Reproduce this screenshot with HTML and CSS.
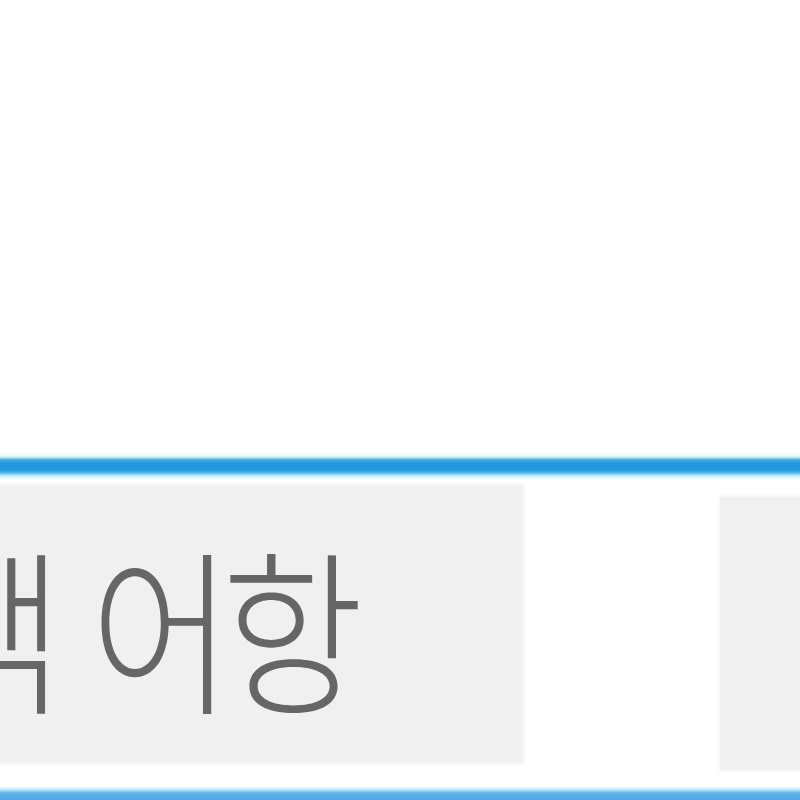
FILE: index.html
```html
<!DOCTYPE html>
<html lang="ko">
<head>
<meta charset="utf-8">
<link rel="stylesheet" href="styles.css">
</head>
<body>
<div class="page">
  <div class="top"></div>
  <div class="rule"></div>
  <div class="tabs">
    <div class="tab tab-first"><span class="label">색 어항</span></div>
    <div class="tab-gap"></div>
    <div class="tab tab-second"></div>
  </div>
  <div class="rule rule-bottom"></div>
</div>
</body>
</html>
```
FILE: styles.css
```css
html, body {
  margin: 0;
  padding: 0;
  background: #ffffff;
  overflow: hidden;
}
.page {
  width: 800px;
  height: 800px;
  display: flex;
  flex-direction: column;
  overflow: hidden;
}
.top {
  height: 454px;
  flex: none;
}
.rule {
  height: 26px;
  flex: none;
  background: linear-gradient(to bottom,
    #ffffff 0px, #c8f1ff 3px, #3aa8e6 6px, #2196dc 10px, #2598de 16px,
    #5ab9ee 19px, #c6eeff 22px, #ffffff 26px);
}
.rule-bottom {
  height: 14px;
  background: linear-gradient(to bottom,
    #ffffff 0px, #c8f1ff 3px, #62b6ea 7px, #4aa8e4 14px);
}
.tabs {
  flex: 1;
  display: flex;
  align-items: flex-start;
  padding-top: 5px;
  overflow: hidden;
}
.tab {
  background: #f0f0f0;
  flex: none;
  box-shadow: 0 0 4px 1px rgba(240,240,240,0.8);
}
.tab-first {
  width: 523px;
  height: 278px;
  display: flex;
  align-items: center;
  overflow: hidden;
}
.tab-gap {
  width: 197px;
  flex: none;
}
.tab-second {
  width: 120px;
  height: 273px;
  margin-top: 12px;
}
.label {
  display: inline-block;
  font-family: "Noto Sans CJK KR", "Noto Sans", sans-serif;
  font-size: 177px;
  font-weight: 300;
  color: #666666;
  white-space: nowrap;
  letter-spacing: -13px;
  word-spacing: 7px;
  margin-left: -79px;
  line-height: 1;
  transform: scaleX(0.875);
  transform-origin: left center;
  flex: none;
}
```
